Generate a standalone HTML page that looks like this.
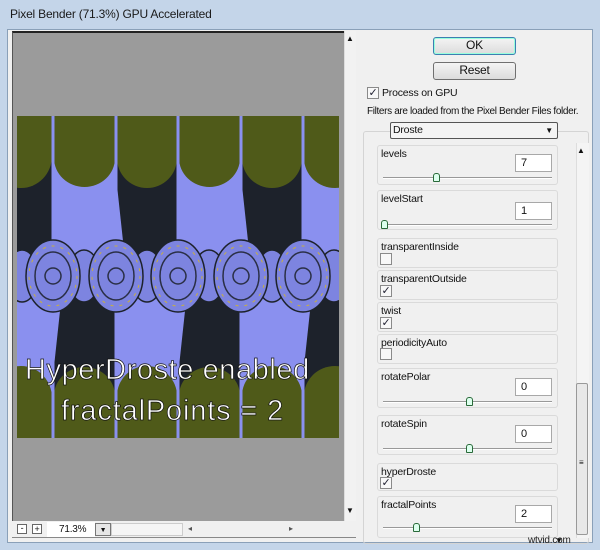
<!DOCTYPE html>
<html><head><style>
*{margin:0;padding:0;box-sizing:border-box}
body{width:600px;height:550px;overflow:hidden;background:#c4d5e9;font-family:"Liberation Sans",sans-serif;font-size:10.5px;color:#111;position:relative;letter-spacing:-0.2px}
.a{position:absolute;white-space:nowrap}
.title{left:10px;top:7px;font-size:12px;color:#1a1a1a}
.content{left:7px;top:29px;width:586px;height:514px;background:#f0f0f0;border:1px solid #8aa0b8}
.btn{border:1px solid #707070;border-radius:3px;background:linear-gradient(#f4f4f4,#dcdcdc);text-align:center;font-size:12px;line-height:15px}
.cb{width:12px;height:12px;border:1px solid #8a8a8a;background:#f8f8f8;font-size:11px;line-height:10px;text-align:center;color:#223}
.box{border:1px solid #dadada;border-radius:3px;left:377px;width:181px}
.box .l{position:absolute;left:3px;top:2px}
.inp{position:absolute;right:5px;width:37px;height:18px;background:#fff;border:1px solid #a8a8a8;padding-left:5px;line-height:16px;font-size:11px}
.sl{position:absolute;left:5px;right:5px;height:2px;border-top:1px solid #999;border-bottom:1px solid #fff}
.th{position:absolute;top:-5px;width:7px;height:9px;background:#dfe;border:1px solid #2a6a3a;border-radius:3px 3px 1px 1px}
</style></head><body>
<div class="a title">Pixel Bender (71.3%) GPU Accelerated</div>
<div class="a content"></div>
<div class="a" style="left:12px;top:31px;width:332px;height:491px;background:#9b9b9b;border-top:2px solid #222;border-left:1px solid #555"></div>
<div class="a" style="left:344px;top:31px;width:12px;height:491px;background:#f2f2f2;border-left:1px solid #ddd"></div>
<div class="a" style="left:346px;top:34px;font-size:8px">▲</div>
<div class="a" style="left:346px;top:506px;font-size:8px">▼</div>
<div class="a" style="left:12px;top:521px;width:344px;height:17px;background:#f0f0f0;border-bottom:1px solid #888"></div>
<div class="a" style="left:17px;top:524px;width:10px;height:10px;border:1px solid #666;font-size:9px;line-height:7px;text-align:center;background:#fff">-</div>
<div class="a" style="left:32px;top:524px;width:10px;height:10px;border:1px solid #666;font-size:9px;line-height:8px;text-align:center;background:#fff">+</div>
<div class="a" style="left:47px;top:522px;width:48px;height:15px;background:#fff;font-size:10px;line-height:15px;padding-left:12px">71.3%</div>
<div class="a" style="left:95px;top:523px;width:16px;height:13px;border:1px solid #777;background:#e6e6e6;font-size:7px;text-align:center;line-height:13px">▼</div>
<div class="a" style="left:111px;top:523px;width:72px;height:13px;border:1px solid #ccc;background:#f5f5f5"></div>
<div class="a" style="left:188px;top:524px;font-size:8px;color:#555">◂</div>
<div class="a" style="left:289px;top:524px;font-size:8px;color:#555">▸</div>
<svg class="a" style="left:17px;top:116px" width="322" height="322" viewBox="0 0 322 322">
<rect width="322" height="322" fill="#1d222b"/>
<g fill="#8a90ef">
<path d="M36 0 h63 v160 h-63z"/><path d="M161 0 h63 v160 h-63z"/><path d="M286 0 h36 v160 h-36z"/>
<path d="M0 160 h36 v162 h-36z"/><path d="M99 160 h62 v162 h-62z"/><path d="M224 160 h62 v162 h-62z"/>
</g>
<g fill="#4f5a19">
<path d="M-27 0 h62 v40 a31 32 0 0 1 -62 0z"/>
<path d="M37 0 h61 v42 a30.5 29 0 0 1 -61 0z"/>
<path d="M100 0 h60 v42 a30 30 0 0 1 -60 0z"/>
<path d="M162 0 h61 v42 a30.5 29 0 0 1 -61 0z"/>
<path d="M225 0 h60 v42 a30 30 0 0 1 -60 0z"/>
<path d="M287 0 h62 v42 a31 30 0 0 1 -62 0z"/>
<path d="M-27 322 h62 v-40 a31 32 0 0 0 -62 0z"/>
<path d="M37 322 h61 v-42 a30.5 29 0 0 0 -61 0z"/>
<path d="M100 322 h60 v-42 a30 30 0 0 0 -60 0z"/>
<path d="M162 322 h61 v-42 a30.5 29 0 0 0 -61 0z"/>
<path d="M225 322 h60 v-42 a30 30 0 0 0 -60 0z"/>
<path d="M287 322 h62 v-42 a31 30 0 0 0 -62 0z"/>
</g>
<g stroke="#8a90ef" stroke-width="3">
<line x1="36" y1="0" x2="36" y2="322"/><line x1="99" y1="0" x2="99" y2="322"/><line x1="161" y1="0" x2="161" y2="322"/><line x1="224" y1="0" x2="224" y2="322"/><line x1="286" y1="0" x2="286" y2="322"/>
</g>
<g fill="#8a90ef">
<path d="M99 60 L106 125 L99 200 L92 125z"/><path d="M224 60 L231 125 L224 200 L217 125z"/>
<path d="M36 260 L43 195 L36 120 L29 195z"/><path d="M161 260 L168 195 L161 120 L154 195z"/><path d="M286 260 L293 195 L286 120 L279 195z"/>
</g>
<g fill="#7d84e0" stroke="#1d222b" stroke-width="1.5">
<ellipse cx="5" cy="160" rx="16" ry="26"/><ellipse cx="67" cy="160" rx="16" ry="26"/><ellipse cx="130" cy="160" rx="16" ry="26"/><ellipse cx="192" cy="160" rx="16" ry="26"/><ellipse cx="255" cy="160" rx="16" ry="26"/><ellipse cx="317" cy="160" rx="16" ry="26"/>
<ellipse cx="36" cy="160" rx="27" ry="36"/><ellipse cx="99" cy="160" rx="27" ry="36"/><ellipse cx="161" cy="160" rx="27" ry="36"/><ellipse cx="224" cy="160" rx="27" ry="36"/><ellipse cx="286" cy="160" rx="27" ry="36"/>
</g>
<g fill="none" stroke="#2a2f45" stroke-width="1.5">
<ellipse cx="36" cy="160" rx="18" ry="24"/><ellipse cx="99" cy="160" rx="18" ry="24"/><ellipse cx="161" cy="160" rx="18" ry="24"/><ellipse cx="224" cy="160" rx="18" ry="24"/><ellipse cx="286" cy="160" rx="18" ry="24"/>
<circle cx="36" cy="160" r="8"/><circle cx="99" cy="160" r="8"/><circle cx="161" cy="160" r="8"/><circle cx="224" cy="160" r="8"/><circle cx="286" cy="160" r="8"/>
</g>
<g fill="none" stroke="#c8b040" stroke-width="1" stroke-dasharray="3 6">
<ellipse cx="36" cy="160" rx="24" ry="30"/><ellipse cx="99" cy="160" rx="24" ry="30"/><ellipse cx="161" cy="160" rx="24" ry="30"/><ellipse cx="224" cy="160" rx="24" ry="30"/><ellipse cx="286" cy="160" rx="24" ry="30"/>
</g>
<g font-family="Liberation Sans,sans-serif" font-size="29" fill="#fff" stroke="#111" stroke-width="0.7">
<text x="8" y="263" textLength="284">HyperDroste enabled</text>
<text x="44" y="304" textLength="222">fractalPoints = 2</text>
</g>
</svg>
<div class="a btn" style="left:433px;top:37px;width:83px;height:18px;border-color:#3c7fb1;box-shadow:inset 0 0 0 1px #9fd">OK</div>
<div class="a btn" style="left:433px;top:62px;width:83px;height:18px">Reset</div>
<div class="a cb" style="left:367px;top:87px">✓</div>
<div class="a" style="left:382px;top:87px">Process on GPU</div>
<div class="a" style="left:367px;top:106px;font-size:10px;letter-spacing:-0.35px">Filters are loaded from the Pixel Bender Files folder.</div>
<div class="a" style="left:363px;top:131px;width:226px;height:413px;border:1px solid #d4d4d4;border-radius:3px"></div>
<div class="a" style="left:390px;top:122px;width:168px;height:17px;background:#f4f4f4;border:1px solid #555;border-radius:2px;padding-left:2px;line-height:15px">Droste<span style="position:absolute;right:4px;font-size:8px">▼</span></div>
<div class="a" style="left:576px;top:143px;width:13px;height:395px;background:#f4f4f4;border-left:1px solid #ddd"></div>
<div class="a" style="left:577px;top:146px;font-size:8px">▲</div>
<div class="a" style="left:576px;top:383px;width:12px;height:152px;background:#e8e8e8;border:1px solid #999;border-radius:2px"></div>
<div class="a" style="left:579px;top:458px;font-size:8px">≡</div>

<div class="a box" style="top:145px;height:40px"><span class="l">levels</span><div class="inp" style="top:8px">7</div><div class="sl" style="top:31px"><div class="th" style="left:50px"></div></div></div>
<div class="a box" style="top:190px;height:40px"><span class="l">levelStart</span><div class="inp" style="top:11px">1</div><div class="sl" style="top:33px"><div class="th" style="left:-2px"></div></div></div>
<div class="a box" style="top:238px;height:30px"><span class="l">transparentInside</span><div class="cb" style="position:absolute;left:2px;top:14px"></div></div>
<div class="a box" style="top:270px;height:30px"><span class="l">transparentOutside</span><div class="cb" style="position:absolute;left:2px;top:14px">✓</div></div>
<div class="a box" style="top:302px;height:30px"><span class="l">twist</span><div class="cb" style="position:absolute;left:2px;top:14px">✓</div></div>
<div class="a box" style="top:334px;height:30px"><span class="l">periodicityAuto</span><div class="cb" style="position:absolute;left:2px;top:13px"></div></div>
<div class="a box" style="top:368px;height:40px"><span class="l">rotatePolar</span><div class="inp" style="top:9px">0</div><div class="sl" style="top:32px"><div class="th" style="left:83px"></div></div></div>
<div class="a box" style="top:415px;height:40px"><span class="l">rotateSpin</span><div class="inp" style="top:9px">0</div><div class="sl" style="top:32px"><div class="th" style="left:83px"></div></div></div>
<div class="a box" style="top:463px;height:28px"><span class="l">hyperDroste</span><div class="cb" style="position:absolute;left:2px;top:13px">✓</div></div>
<div class="a box" style="top:496px;height:42px"><span class="l">fractalPoints</span><div class="inp" style="top:8px">2</div><div class="sl" style="top:30px"><div class="th" style="left:30px"></div></div></div>
<div class="a" style="left:555px;top:536px;font-size:8px">▼</div>
<div class="a" style="left:528px;top:535px;font-size:10px;color:#222">wtvid.com</div>
</body></html>
